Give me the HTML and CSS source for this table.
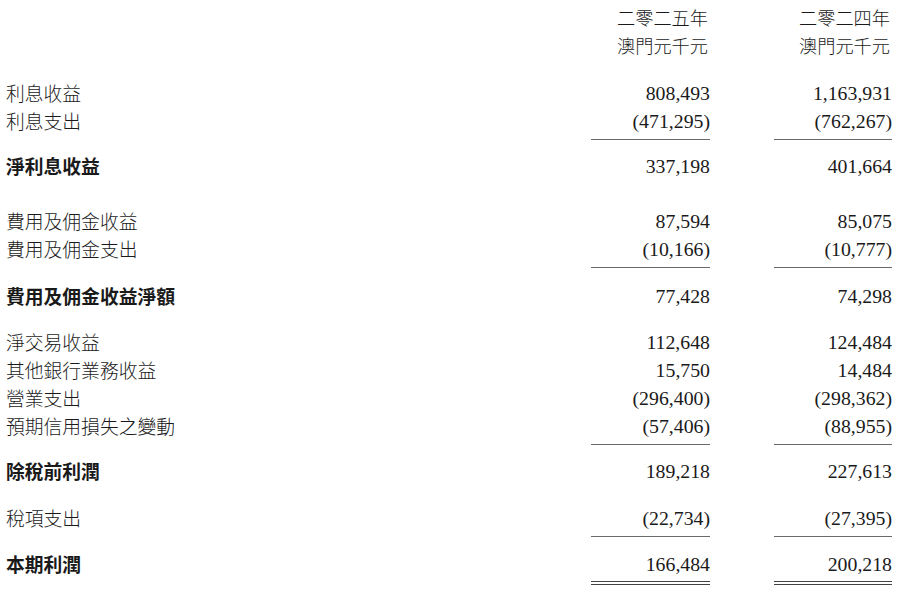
FILE: index.html
```html
<!DOCTYPE html>
<html lang="zh-Hant">
<head>
<meta charset="utf-8">
<link rel="stylesheet" href="styles.css">
</head>
<body>
<div class="sheet">
  <div class="row head first"><span></span><span class="h">二零二五年</span><span class="h">二零二四年</span></div>
  <div class="row head"><span></span><span class="h">澳門元千元</span><span class="h">澳門元千元</span></div>

  <div class="row gap20"><span class="lab">利息收益</span><span class="num">808,493</span><span class="num">1,163,931</span></div>
  <div class="row ruled"><span class="lab">利息支出</span><span class="num">(471,295)</span><span class="num">(762,267)</span></div>
  <div class="row total gap12"><span class="lab">淨利息收益</span><span class="num">337,198</span><span class="num">401,664</span></div>

  <div class="row gap27"><span class="lab">費用及佣金收益</span><span class="num">87,594</span><span class="num">85,075</span></div>
  <div class="row ruled"><span class="lab">費用及佣金支出</span><span class="num">(10,166)</span><span class="num">(10,777)</span></div>
  <div class="row total gap14"><span class="lab">費用及佣金收益淨額</span><span class="num">77,428</span><span class="num">74,298</span></div>

  <div class="row gap18"><span class="lab">淨交易收益</span><span class="num">112,648</span><span class="num">124,484</span></div>
  <div class="row"><span class="lab">其他銀行業務收益</span><span class="num">15,750</span><span class="num">14,484</span></div>
  <div class="row"><span class="lab">營業支出</span><span class="num">(296,400)</span><span class="num">(298,362)</span></div>
  <div class="row ruled"><span class="lab">預期信用損失之變動</span><span class="num">(57,406)</span><span class="num">(88,955)</span></div>
  <div class="row total gap12"><span class="lab">除稅前利潤</span><span class="num">189,218</span><span class="num">227,613</span></div>

  <div class="row gap19 ruled"><span class="lab">稅項支出</span><span class="num">(22,734)</span><span class="num">(27,395)</span></div>
  <div class="row total gap13 double"><span class="lab">本期利潤</span><span class="num">166,484</span><span class="num">200,218</span></div>
</div>
</body>
</html>
```
FILE: styles.css
```css
html, body {
  margin: 0;
  padding: 0;
  background: #ffffff;
}
.sheet {
  width: 908px;
  box-sizing: border-box;
  padding: 3px 16px 0 6px;
  color: #1a1a1a;
  font-family: "Noto Sans CJK TC", "Noto Sans CJK SC", sans-serif;
}
.row {
  display: grid;
  grid-template-columns: 1fr 119px 118px;
  column-gap: 64px;
  height: 28px;
  align-items: start;
}
.row > span {
  display: block;
  height: 28px;
  line-height: 28px;
  white-space: nowrap;
}
.lab {
  font-size: 18.8px;
  font-weight: 300;
}
.h {
  font-size: 18.2px;
  font-weight: 300;
  text-align: right;
  padding-right: 2px;
}
.num {
  font-family: "Liberation Serif", "Times New Roman", serif;
  font-size: 19.8px;
  text-align: right;
}
.total .lab {
  font-weight: 700;
}
.ruled {
  height: 33px;
}
.ruled .num {
  height: 32px;
  border-bottom: 1px solid #6a6a6a;
}
.double {
  height: 35px;
}
.double .num {
  height: 31px;
  border-bottom: 4px double #444444;
}
.gap12 { margin-top: 12px; }
.gap13 { margin-top: 13px; }
.gap14 { margin-top: 14px; }
.gap18 { margin-top: 18px; }
.gap19 { margin-top: 19px; }
.gap20 { margin-top: 20px; }
.gap27 { margin-top: 27px; }
```
